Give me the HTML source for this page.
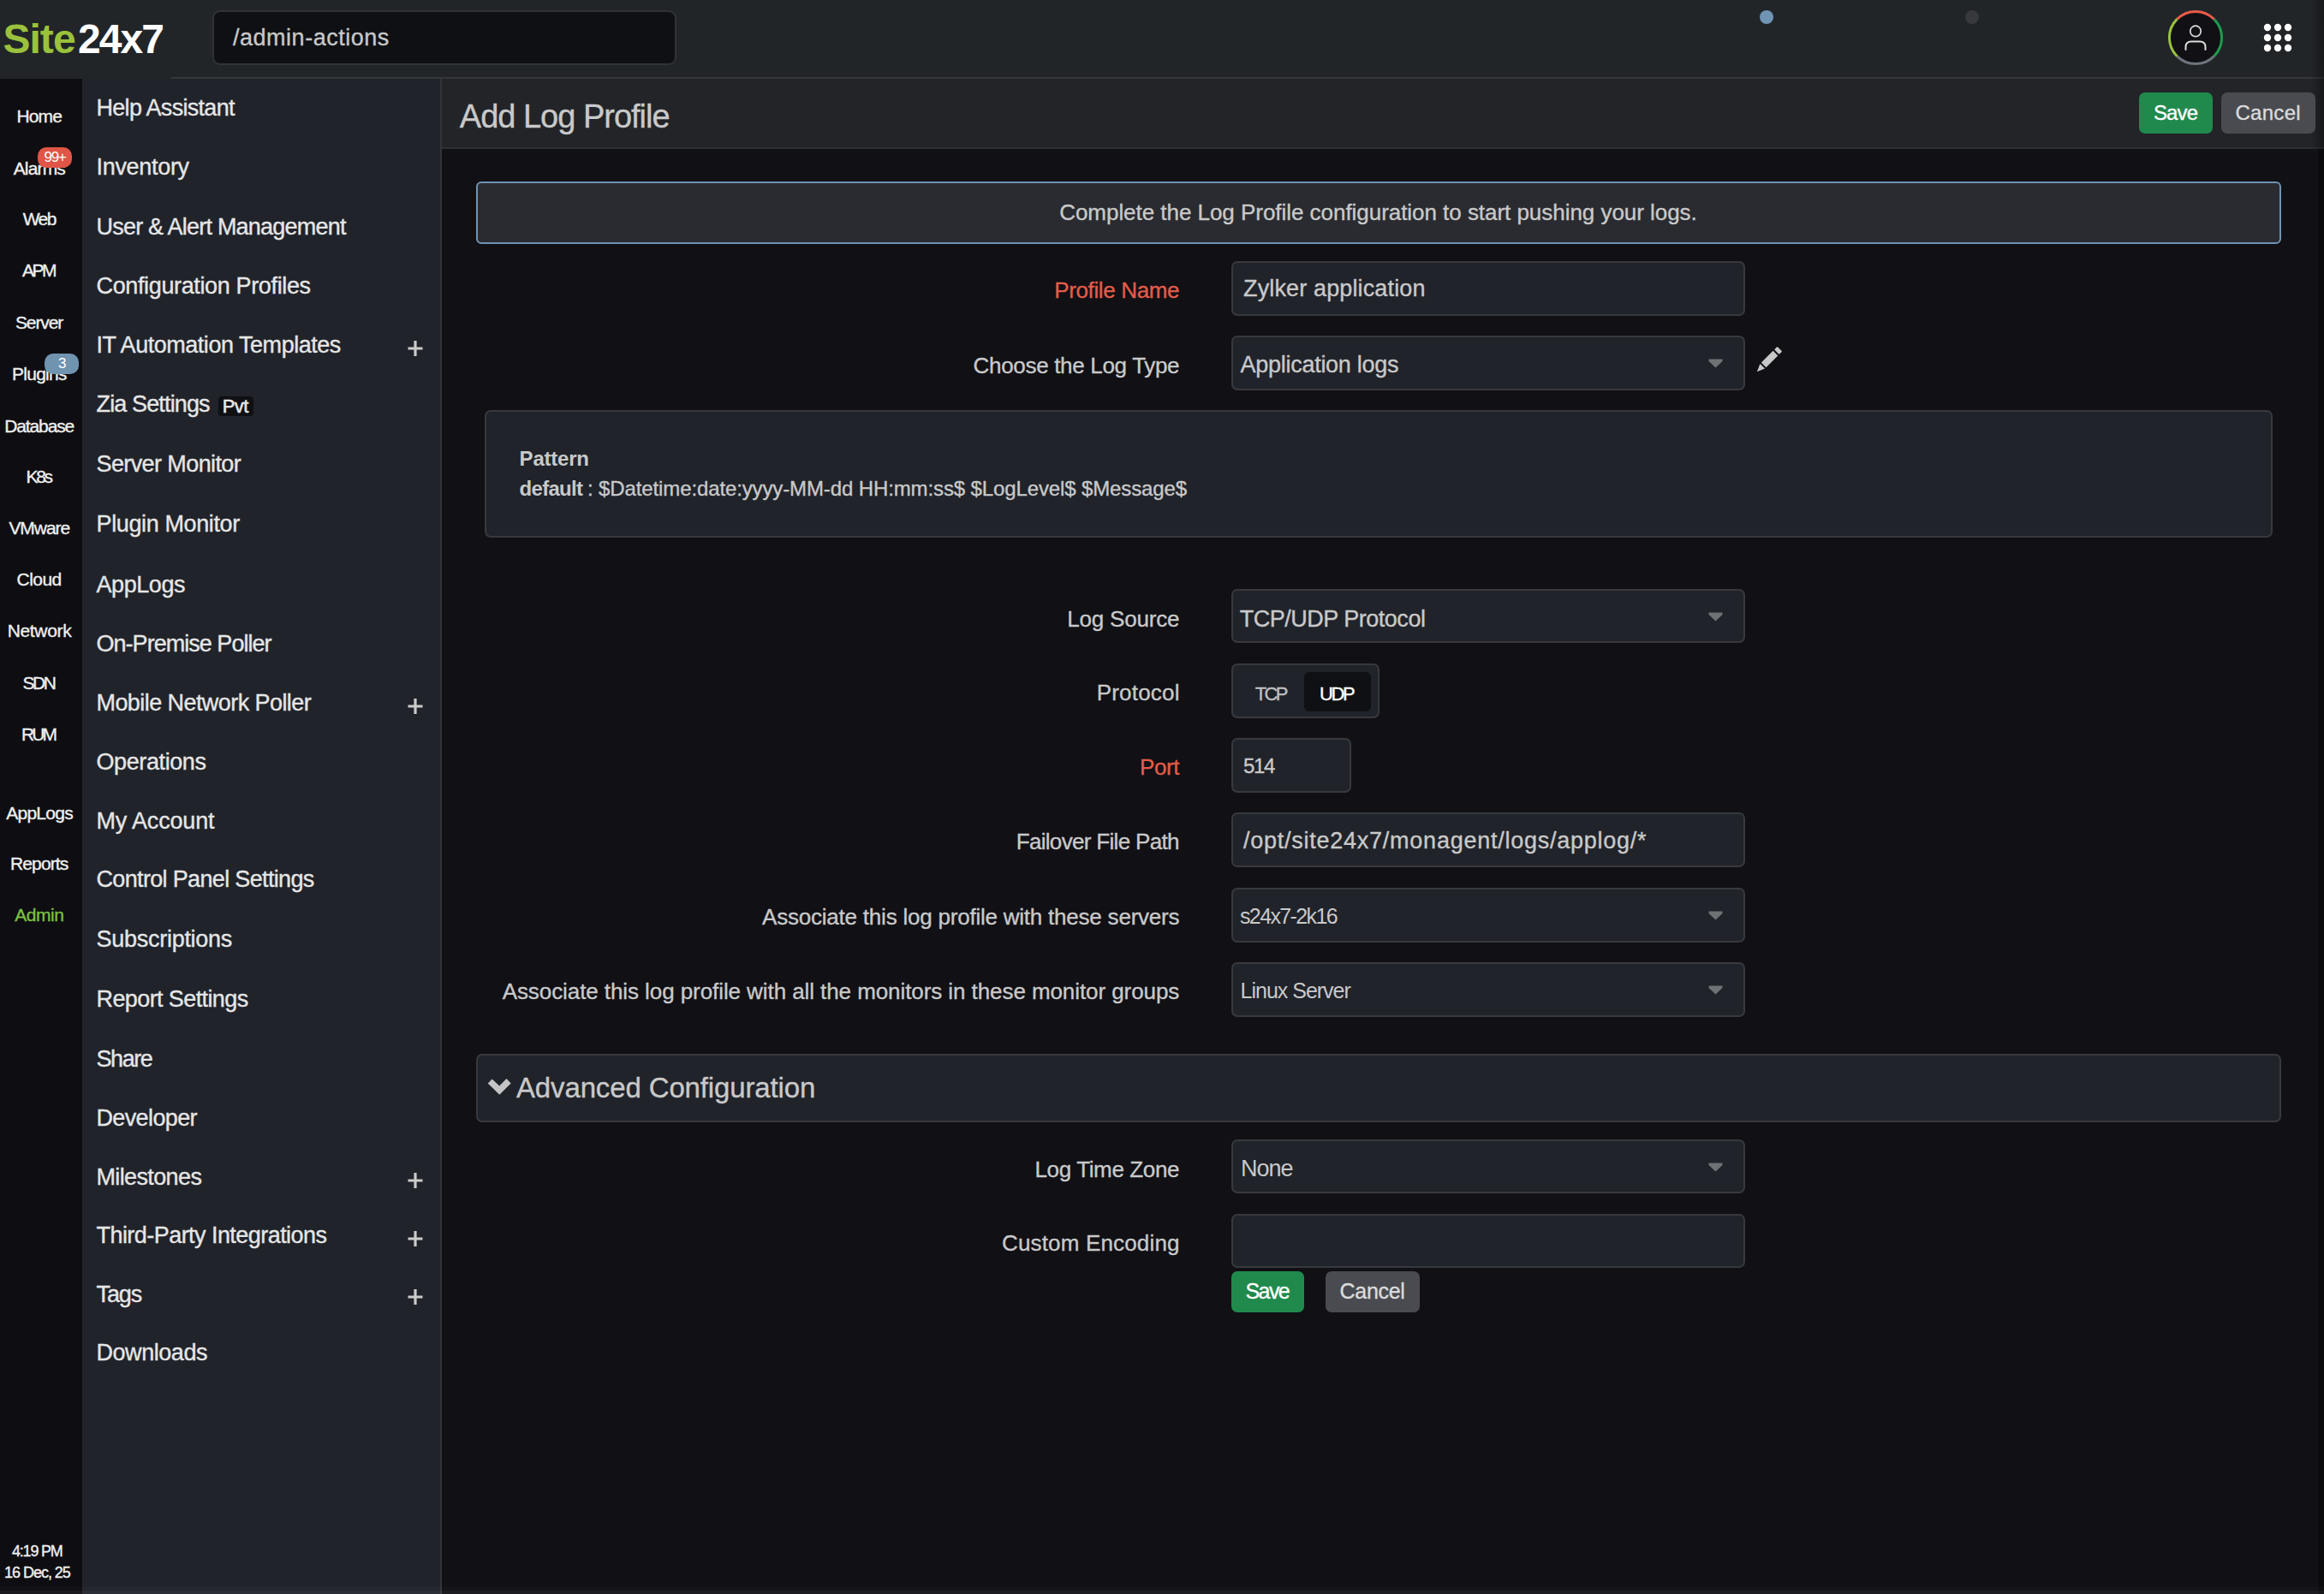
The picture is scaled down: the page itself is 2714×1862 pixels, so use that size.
<!DOCTYPE html>
<html><head><meta charset="utf-8"><style>
html,body{margin:0;padding:0;width:2714px;height:1862px;overflow:hidden;background:#101015;}
.b{position:absolute;}
.t{position:absolute;white-space:nowrap;line-height:1;font-family:"Liberation Sans",sans-serif;}
</style></head><body>
<div class="b" style="left:0px;top:0px;width:2714px;height:92px;background:#222528;"></div>
<div class="b" style="left:200px;top:90px;width:2514px;height:2px;background:#36373a;"></div>
<div class="b" style="left:248px;top:12px;width:542px;height:64px;background:#0f1014;border:2px solid #303236;box-sizing:border-box;border-radius:9px;"></div>
<div class="b" style="left:2055px;top:12px;width:16px;height:16px;background:#6f94b4;border-radius:8px;"></div>
<div class="b" style="left:2295px;top:12px;width:16px;height:16px;background:#38393c;border-radius:8px;"></div>
<div class="b" style="left:0px;top:92px;width:96px;height:1770px;background:#0e0e12;"></div>
<div class="b" style="left:96px;top:92px;width:418px;height:1770px;background:#20232a;"></div>
<div class="b" style="left:514px;top:92px;width:2px;height:1770px;background:#323336;"></div>
<div class="b" style="left:516px;top:92px;width:2198px;height:80px;background:#222428;"></div>
<div class="b" style="left:516px;top:172px;width:2198px;height:2px;background:#2e3034;"></div>
<div class="b" style="left:516px;top:174px;width:2192px;height:1688px;background:#101015;"></div>
<div class="b" style="left:2708px;top:174px;width:6px;height:1688px;background:#0a0a0d;"></div>
<div class="b" style="left:0px;top:1853px;width:2714px;height:5px;background:rgba(255,255,255,0.02);"></div>
<div class="b" style="left:0px;top:1858px;width:2714px;height:4px;background:rgba(255,255,255,0.05);"></div>
<div class="b" style="left:2698px;top:0px;width:16px;height:174px;background:linear-gradient(to right, rgba(0,0,0,0), rgba(0,0,0,0.35));"></div>
<div class="b" style="left:2498px;top:108px;width:86px;height:48px;background:#208a4d;border-radius:7px;"></div>
<div class="b" style="left:2594px;top:108px;width:110px;height:48px;background:#4a4b50;border-radius:7px;"></div>
<div class="b" style="left:556px;top:212px;width:2108px;height:73px;background:#2a2b30;border:2px solid #6f93b3;box-sizing:border-box;border-radius:6px;"></div>
<div class="b" style="left:1438px;top:305px;width:600px;height:64px;background:#20232a;border:2px solid #38393d;box-sizing:border-box;border-radius:7px;"></div>
<div class="b" style="left:1438px;top:392px;width:600px;height:64px;background:#20232a;border:2px solid #38393d;box-sizing:border-box;border-radius:7px;"></div>
<div class="b" style="left:1438px;top:688px;width:600px;height:63px;background:#20232a;border:2px solid #38393d;box-sizing:border-box;border-radius:7px;"></div>
<div class="b" style="left:1438px;top:775px;width:173px;height:64px;background:#20232a;border:2px solid #38393d;box-sizing:border-box;border-radius:7px;"></div>
<div class="b" style="left:1438px;top:862px;width:140px;height:64px;background:#20232a;border:2px solid #38393d;box-sizing:border-box;border-radius:7px;"></div>
<div class="b" style="left:1438px;top:949px;width:600px;height:64px;background:#20232a;border:2px solid #38393d;box-sizing:border-box;border-radius:7px;"></div>
<div class="b" style="left:1438px;top:1037px;width:600px;height:64px;background:#20232a;border:2px solid #38393d;box-sizing:border-box;border-radius:7px;"></div>
<div class="b" style="left:1438px;top:1124px;width:600px;height:64px;background:#20232a;border:2px solid #38393d;box-sizing:border-box;border-radius:7px;"></div>
<div class="b" style="left:1438px;top:1331px;width:600px;height:63px;background:#20232a;border:2px solid #38393d;box-sizing:border-box;border-radius:7px;"></div>
<div class="b" style="left:1438px;top:1418px;width:600px;height:63px;background:#20232a;border:2px solid #38393d;box-sizing:border-box;border-radius:7px;"></div>
<div class="b" style="left:1523px;top:785px;width:78px;height:46px;background:#0f1013;border-radius:6px;"></div>
<div class="b" style="left:566px;top:479px;width:2088px;height:149px;background:#20232a;border:2px solid #38393d;box-sizing:border-box;border-radius:7px;"></div>
<div class="b" style="left:556px;top:1231px;width:2108px;height:80px;background:#20232a;border:2px solid #38393d;box-sizing:border-box;border-radius:7px;"></div>
<div class="b" style="left:1438px;top:1485px;width:85px;height:48px;background:#208a4d;border-radius:7px;"></div>
<div class="b" style="left:1548px;top:1485px;width:110px;height:48px;background:#4a4b50;border-radius:7px;"></div>
<div class="b" style="left:44px;top:172px;width:40px;height:24px;background:#e05545;border-radius:10px;z-index:2;"></div>
<div class="b" style="left:52px;top:413px;width:40px;height:24px;background:#7093b0;border-radius:10px;z-index:2;"></div>
<div class="b" style="left:255px;top:463px;width:41px;height:23px;background:#0f1013;border-radius:4px;"></div>
<svg class="b" style="left:1995px;top:419px" width="18" height="11"><path d="M0.5 0.5H16.5V3L8.5 10.5L0.5 3Z" fill="#6d7275"/></svg>
<svg class="b" style="left:1995px;top:715px" width="18" height="11"><path d="M0.5 0.5H16.5V3L8.5 10.5L0.5 3Z" fill="#6d7275"/></svg>
<svg class="b" style="left:1995px;top:1064px" width="18" height="11"><path d="M0.5 0.5H16.5V3L8.5 10.5L0.5 3Z" fill="#6d7275"/></svg>
<svg class="b" style="left:1995px;top:1151px" width="18" height="11"><path d="M0.5 0.5H16.5V3L8.5 10.5L0.5 3Z" fill="#6d7275"/></svg>
<svg class="b" style="left:1995px;top:1358px" width="18" height="11"><path d="M0.5 0.5H16.5V3L8.5 10.5L0.5 3Z" fill="#6d7275"/></svg>
<svg class="b" style="left:2047px;top:401px" width="38" height="38"><g transform="translate(19,19) rotate(-45)"><rect x="-9" y="-4" width="19.5" height="8" fill="#c8c8c8"/><rect x="12.5" y="-4" width="5" height="8" rx="1" fill="#c8c8c8"/><path d="M-11 -4 L-11 4 L-20 0 Z" fill="#c8c8c8"/></g></svg>
<svg class="b" style="left:476.4px;top:397.8px" width="18" height="18"><path d="M9 0V18M0.5 9H17.5" stroke="#cbcbcb" stroke-width="3.2"/></svg>
<svg class="b" style="left:476.4px;top:815.7px" width="18" height="18"><path d="M9 0V18M0.5 9H17.5" stroke="#cbcbcb" stroke-width="3.2"/></svg>
<svg class="b" style="left:476.4px;top:1369.6px" width="18" height="18"><path d="M9 0V18M0.5 9H17.5" stroke="#cbcbcb" stroke-width="3.2"/></svg>
<svg class="b" style="left:476.4px;top:1438.0px" width="18" height="18"><path d="M9 0V18M0.5 9H17.5" stroke="#cbcbcb" stroke-width="3.2"/></svg>
<svg class="b" style="left:476.4px;top:1506.0px" width="18" height="18"><path d="M9 0V18M0.5 9H17.5" stroke="#cbcbcb" stroke-width="3.2"/></svg>
<svg class="b" style="left:560px;top:1245px" width="40" height="40"><path d="M9.7 20.4L14.7 15.4L23.2 23.4L31.5 15.1L36.7 20.4L23.3 33.7Z" fill="#c4c4c4"/></svg>
<svg class="b" style="left:2528px;top:8px" width="72" height="72" viewBox="0 0 72 72">
<circle cx="36" cy="36" r="30" fill="#101015"/>
<path d="M14.4 14.4 A30.5 30.5 0 0 1 57.6 14.4" stroke="#e85a48" stroke-width="3" fill="none"/>
<path d="M57.6 14.4 A30.5 30.5 0 0 1 57.6 57.6" stroke="#1f9a4e" stroke-width="3" fill="none"/>
<path d="M57.6 57.6 A30.5 30.5 0 0 1 14.4 57.6" stroke="#6f747c" stroke-width="3" fill="none"/>
<path d="M14.4 57.6 A30.5 30.5 0 0 1 14.4 14.4" stroke="#9ac33b" stroke-width="3" fill="none"/>
<circle cx="36" cy="28.4" r="6.2" stroke="#dddddd" stroke-width="1.7" fill="none"/>
<path d="M24.5 50 V47 Q24.5 40.5 31 40.5 H41 Q47.5 40.5 47.5 47 V50" stroke="#dddddd" stroke-width="2" fill="none" stroke-linecap="round"/>
</svg>
<svg class="b" style="left:2636px;top:20px" width="48" height="48"><circle cx="12" cy="12" r="4.2" fill="#fff"/><circle cx="12" cy="24" r="4.2" fill="#fff"/><circle cx="12" cy="36" r="4.2" fill="#fff"/><circle cx="24" cy="12" r="4.2" fill="#fff"/><circle cx="24" cy="24" r="4.2" fill="#fff"/><circle cx="24" cy="36" r="4.2" fill="#fff"/><circle cx="36" cy="12" r="4.2" fill="#fff"/><circle cx="36" cy="24" r="4.2" fill="#fff"/><circle cx="36" cy="36" r="4.2" fill="#fff"/></svg>
<span class="t" style="left:3.4px;top:21.5px;font-size:48px;color:#9ac23c;font-weight:700;letter-spacing:-0.94px;">Site</span>
<span class="t" style="left:91.0px;top:21.5px;font-size:48px;color:#ffffff;font-weight:700;letter-spacing:-1.93px;">24x7</span>
<span class="t" style="left:272.0px;top:30.8px;font-size:27px;color:#c8c8c8;font-weight:400;letter-spacing:0.52px;-webkit-text-stroke:0.35px currentColor;">/admin-actions</span>
<span class="t" style="left:19.4px;top:125.0px;font-size:21px;color:#f0f0f0;font-weight:400;letter-spacing:-0.81px;-webkit-text-stroke:0.35px currentColor;">Home</span>
<span class="t" style="left:15.7px;top:186.0px;font-size:21px;color:#f0f0f0;font-weight:400;letter-spacing:-0.85px;-webkit-text-stroke:0.35px currentColor;">Alarms</span>
<span class="t" style="left:26.7px;top:245.0px;font-size:21px;color:#f0f0f0;font-weight:400;letter-spacing:-1.51px;-webkit-text-stroke:0.35px currentColor;">Web</span>
<span class="t" style="left:26.0px;top:305.0px;font-size:21px;color:#f0f0f0;font-weight:400;letter-spacing:-2.51px;-webkit-text-stroke:0.35px currentColor;">APM</span>
<span class="t" style="left:17.9px;top:366.3px;font-size:21px;color:#f0f0f0;font-weight:400;letter-spacing:-1.09px;-webkit-text-stroke:0.35px currentColor;">Server</span>
<span class="t" style="left:14.1px;top:426.0px;font-size:21px;color:#f0f0f0;font-weight:400;letter-spacing:-0.77px;-webkit-text-stroke:0.35px currentColor;">Plugins</span>
<span class="t" style="left:5.3px;top:486.5px;font-size:21px;color:#f0f0f0;font-weight:400;letter-spacing:-1.14px;-webkit-text-stroke:0.35px currentColor;">Database</span>
<span class="t" style="left:30.4px;top:546.0px;font-size:21px;color:#f0f0f0;font-weight:400;letter-spacing:-2.24px;-webkit-text-stroke:0.35px currentColor;">K8s</span>
<span class="t" style="left:10.4px;top:606.3px;font-size:21px;color:#f0f0f0;font-weight:400;letter-spacing:-1.05px;-webkit-text-stroke:0.35px currentColor;">VMware</span>
<span class="t" style="left:19.6px;top:665.9px;font-size:21px;color:#f0f0f0;font-weight:400;letter-spacing:-0.57px;-webkit-text-stroke:0.35px currentColor;">Cloud</span>
<span class="t" style="left:8.7px;top:725.9px;font-size:21px;color:#f0f0f0;font-weight:400;letter-spacing:-0.34px;-webkit-text-stroke:0.35px currentColor;">Network</span>
<span class="t" style="left:26.6px;top:787.0px;font-size:21px;color:#f0f0f0;font-weight:400;letter-spacing:-2.57px;-webkit-text-stroke:0.35px currentColor;">SDN</span>
<span class="t" style="left:25.1px;top:846.5px;font-size:21px;color:#f0f0f0;font-weight:400;letter-spacing:-2.96px;-webkit-text-stroke:0.35px currentColor;">RUM</span>
<span class="t" style="left:7.2px;top:938.6px;font-size:21px;color:#f0f0f0;font-weight:400;letter-spacing:-0.73px;-webkit-text-stroke:0.35px currentColor;">AppLogs</span>
<span class="t" style="left:12.1px;top:998.0px;font-size:21px;color:#f0f0f0;font-weight:400;letter-spacing:-0.91px;-webkit-text-stroke:0.35px currentColor;">Reports</span>
<span class="t" style="left:17.3px;top:1057.8px;font-size:21px;color:#7cc142;font-weight:400;letter-spacing:-0.46px;-webkit-text-stroke:0.35px currentColor;">Admin</span>
<span class="t" style="left:14.0px;top:1803.0px;font-size:18px;color:#f0f0f0;font-weight:400;letter-spacing:-1.21px;-webkit-text-stroke:0.35px currentColor;">4:19 PM</span>
<span class="t" style="left:5.0px;top:1827.9px;font-size:18px;color:#f0f0f0;font-weight:400;letter-spacing:-1.02px;-webkit-text-stroke:0.35px currentColor;">16 Dec, 25</span>
<span class="t" style="left:112.5px;top:112.5px;font-size:27px;color:#e6e6e6;font-weight:400;letter-spacing:-0.70px;-webkit-text-stroke:0.35px currentColor;">Help Assistant</span>
<span class="t" style="left:112.5px;top:181.5px;font-size:27px;color:#e6e6e6;font-weight:400;letter-spacing:-0.31px;-webkit-text-stroke:0.35px currentColor;">Inventory</span>
<span class="t" style="left:112.5px;top:251.5px;font-size:27px;color:#e6e6e6;font-weight:400;letter-spacing:-0.78px;-webkit-text-stroke:0.35px currentColor;">User &amp; Alert Management</span>
<span class="t" style="left:112.5px;top:321.4px;font-size:27px;color:#e6e6e6;font-weight:400;letter-spacing:-0.36px;-webkit-text-stroke:0.35px currentColor;">Configuration Profiles</span>
<span class="t" style="left:112.5px;top:390.4px;font-size:27px;color:#e6e6e6;font-weight:400;letter-spacing:-0.47px;-webkit-text-stroke:0.35px currentColor;">IT Automation Templates</span>
<span class="t" style="left:112.5px;top:459.1px;font-size:27px;color:#e6e6e6;font-weight:400;letter-spacing:-0.86px;-webkit-text-stroke:0.35px currentColor;">Zia Settings</span>
<span class="t" style="left:112.5px;top:529.0px;font-size:27px;color:#e6e6e6;font-weight:400;letter-spacing:-0.60px;-webkit-text-stroke:0.35px currentColor;">Server Monitor</span>
<span class="t" style="left:112.5px;top:598.5px;font-size:27px;color:#e6e6e6;font-weight:400;letter-spacing:-0.38px;-webkit-text-stroke:0.35px currentColor;">Plugin Monitor</span>
<span class="t" style="left:112.5px;top:669.5px;font-size:27px;color:#e6e6e6;font-weight:400;letter-spacing:-0.43px;-webkit-text-stroke:0.35px currentColor;">AppLogs</span>
<span class="t" style="left:112.5px;top:738.7px;font-size:27px;color:#e6e6e6;font-weight:400;letter-spacing:-0.97px;-webkit-text-stroke:0.35px currentColor;">On-Premise Poller</span>
<span class="t" style="left:112.5px;top:808.0px;font-size:27px;color:#e6e6e6;font-weight:400;letter-spacing:-0.57px;-webkit-text-stroke:0.35px currentColor;">Mobile Network Poller</span>
<span class="t" style="left:112.5px;top:877.2px;font-size:27px;color:#e6e6e6;font-weight:400;letter-spacing:-0.40px;-webkit-text-stroke:0.35px currentColor;">Operations</span>
<span class="t" style="left:112.5px;top:945.9px;font-size:27px;color:#e6e6e6;font-weight:400;letter-spacing:-0.17px;-webkit-text-stroke:0.35px currentColor;">My Account</span>
<span class="t" style="left:112.5px;top:1013.8px;font-size:27px;color:#e6e6e6;font-weight:400;letter-spacing:-0.66px;-webkit-text-stroke:0.35px currentColor;">Control Panel Settings</span>
<span class="t" style="left:112.5px;top:1083.9px;font-size:27px;color:#e6e6e6;font-weight:400;letter-spacing:-0.27px;-webkit-text-stroke:0.35px currentColor;">Subscriptions</span>
<span class="t" style="left:112.5px;top:1153.5px;font-size:27px;color:#e6e6e6;font-weight:400;letter-spacing:-0.60px;-webkit-text-stroke:0.35px currentColor;">Report Settings</span>
<span class="t" style="left:112.5px;top:1223.5px;font-size:27px;color:#e6e6e6;font-weight:400;letter-spacing:-1.44px;-webkit-text-stroke:0.35px currentColor;">Share</span>
<span class="t" style="left:112.5px;top:1293.1px;font-size:27px;color:#e6e6e6;font-weight:400;letter-spacing:-0.63px;-webkit-text-stroke:0.35px currentColor;">Developer</span>
<span class="t" style="left:112.5px;top:1362.2px;font-size:27px;color:#e6e6e6;font-weight:400;letter-spacing:-0.63px;-webkit-text-stroke:0.35px currentColor;">Milestones</span>
<span class="t" style="left:112.5px;top:1430.2px;font-size:27px;color:#e6e6e6;font-weight:400;letter-spacing:-0.55px;-webkit-text-stroke:0.35px currentColor;">Third-Party Integrations</span>
<span class="t" style="left:112.5px;top:1498.5px;font-size:27px;color:#e6e6e6;font-weight:400;letter-spacing:-1.12px;-webkit-text-stroke:0.35px currentColor;">Tags</span>
<span class="t" style="left:112.5px;top:1566.5px;font-size:27px;color:#e6e6e6;font-weight:400;letter-spacing:-0.45px;-webkit-text-stroke:0.35px currentColor;">Downloads</span>
<span class="t" style="left:259.8px;top:463.6px;font-size:22px;color:#e6e6e6;font-weight:400;letter-spacing:-0.65px;-webkit-text-stroke:0.6px currentColor;">Pvt</span>
<span class="t" style="left:51.4px;top:175.0px;font-size:17px;color:#ffffff;font-weight:400;letter-spacing:-1.17px;z-index:3;">99+</span>
<span class="t" style="left:67.9px;top:416.0px;font-size:17px;color:#ffffff;font-weight:400;letter-spacing:0.00px;z-index:3;">3</span>
<span class="t" style="left:536.8px;top:117.0px;font-size:38px;color:#c9c9c9;font-weight:400;letter-spacing:-1.00px;-webkit-text-stroke:0.35px currentColor;">Add Log Profile</span>
<span class="t" style="left:2514.9px;top:119.5px;font-size:24px;color:#ffffff;font-weight:400;letter-spacing:-0.83px;-webkit-text-stroke:0.35px currentColor;">Save</span>
<span class="t" style="left:2610.5px;top:119.5px;font-size:24px;color:#dcdcdc;font-weight:400;letter-spacing:0.28px;-webkit-text-stroke:0.35px currentColor;">Cancel</span>
<span class="t" style="left:1237.2px;top:234.8px;font-size:26px;color:#c9c9c9;font-weight:400;letter-spacing:-0.04px;-webkit-text-stroke:0.35px currentColor;">Complete the Log Profile configuration to start pushing your logs.</span>
<span class="t" style="left:1231.2px;top:325.5px;font-size:26px;color:#e25c49;font-weight:400;letter-spacing:-0.36px;-webkit-text-stroke:0.35px currentColor;">Profile Name</span>
<span class="t" style="left:1136.6px;top:414.3px;font-size:26px;color:#c9c9c9;font-weight:400;letter-spacing:-0.32px;-webkit-text-stroke:0.35px currentColor;">Choose the Log Type</span>
<span class="t" style="left:1246.3px;top:710.4px;font-size:26px;color:#c9c9c9;font-weight:400;letter-spacing:-0.20px;-webkit-text-stroke:0.35px currentColor;">Log Source</span>
<span class="t" style="left:1280.7px;top:796.4px;font-size:26px;color:#c9c9c9;font-weight:400;letter-spacing:0.20px;-webkit-text-stroke:0.35px currentColor;">Protocol</span>
<span class="t" style="left:1331.0px;top:882.5px;font-size:26px;color:#e25c49;font-weight:400;letter-spacing:-0.40px;-webkit-text-stroke:0.35px currentColor;">Port</span>
<span class="t" style="left:1186.7px;top:970.0px;font-size:26px;color:#c9c9c9;font-weight:400;letter-spacing:-0.68px;-webkit-text-stroke:0.35px currentColor;">Failover File Path</span>
<span class="t" style="left:890.1px;top:1058.0px;font-size:26px;color:#c9c9c9;font-weight:400;letter-spacing:-0.22px;-webkit-text-stroke:0.35px currentColor;">Associate this log profile with these servers</span>
<span class="t" style="left:586.7px;top:1144.7px;font-size:26px;color:#c9c9c9;font-weight:400;letter-spacing:-0.08px;-webkit-text-stroke:0.35px currentColor;">Associate this log profile with all the monitors in these monitor groups</span>
<span class="t" style="left:1208.5px;top:1353.2px;font-size:26px;color:#c9c9c9;font-weight:400;letter-spacing:-0.37px;-webkit-text-stroke:0.35px currentColor;">Log Time Zone</span>
<span class="t" style="left:1170.0px;top:1439.3px;font-size:26px;color:#c9c9c9;font-weight:400;letter-spacing:0.16px;-webkit-text-stroke:0.35px currentColor;">Custom Encoding</span>
<span class="t" style="left:1452.0px;top:323.5px;font-size:27px;color:#c9c9c9;font-weight:400;letter-spacing:0.14px;-webkit-text-stroke:0.35px currentColor;">Zylker application</span>
<span class="t" style="left:1448.5px;top:412.9px;font-size:27px;color:#c9c9c9;font-weight:400;letter-spacing:-0.27px;-webkit-text-stroke:0.35px currentColor;">Application logs</span>
<span class="t" style="left:1447.7px;top:709.9px;font-size:27px;color:#c9c9c9;font-weight:400;letter-spacing:-0.49px;-webkit-text-stroke:0.35px currentColor;">TCP/UDP Protocol</span>
<span class="t" style="left:1452.0px;top:882.7px;font-size:24px;color:#c9c9c9;font-weight:400;letter-spacing:-1.32px;-webkit-text-stroke:0.35px currentColor;">514</span>
<span class="t" style="left:1452.0px;top:969.4px;font-size:27px;color:#c9c9c9;font-weight:400;letter-spacing:0.75px;-webkit-text-stroke:0.35px currentColor;">/opt/site24x7/monagent/logs/applog/*</span>
<span class="t" style="left:1448.0px;top:1057.9px;font-size:25px;color:#c9c9c9;font-weight:400;letter-spacing:-1.63px;">s24x7-2k16</span>
<span class="t" style="left:1448.6px;top:1144.6px;font-size:25px;color:#c9c9c9;font-weight:400;letter-spacing:-1.01px;">Linux Server</span>
<span class="t" style="left:1449.0px;top:1352.3px;font-size:27px;color:#c9c9c9;font-weight:400;letter-spacing:-1.05px;">None</span>
<span class="t" style="left:1465.7px;top:799.5px;font-size:22px;color:#c0c0c0;font-weight:400;letter-spacing:-2.60px;-webkit-text-stroke:0.35px currentColor;">TCP</span>
<span class="t" style="left:1541.0px;top:799.5px;font-size:22px;color:#ffffff;font-weight:400;letter-spacing:-2.33px;-webkit-text-stroke:0.35px currentColor;">UDP</span>
<span class="t" style="left:606.6px;top:523.9px;font-size:24px;color:#c9c9c9;font-weight:700;letter-spacing:-0.21px;">Pattern</span>
<span class="t" style="left:606.6px;top:558.8px;font-size:24px;color:#c9c9c9;font-weight:700;letter-spacing:-0.71px;">default</span>
<span class="t" style="left:686.0px;top:558.8px;font-size:24px;color:#c9c9c9;font-weight:400;letter-spacing:-0.12px;-webkit-text-stroke:0.35px currentColor;">: $Datetime:date:yyyy-MM-dd HH:mm:ss$ $LogLevel$ $Message$</span>
<span class="t" style="left:603.0px;top:1254.3px;font-size:33px;color:#c9c9c9;font-weight:400;letter-spacing:-0.14px;-webkit-text-stroke:0.35px currentColor;">Advanced Configuration</span>
<span class="t" style="left:1454.5px;top:1496.0px;font-size:25px;color:#ffffff;font-weight:400;letter-spacing:-1.59px;-webkit-text-stroke:0.35px currentColor;">Save</span>
<span class="t" style="left:1564.6px;top:1496.0px;font-size:25px;color:#dcdcdc;font-weight:400;letter-spacing:-0.33px;-webkit-text-stroke:0.35px currentColor;">Cancel</span>
</body></html>
